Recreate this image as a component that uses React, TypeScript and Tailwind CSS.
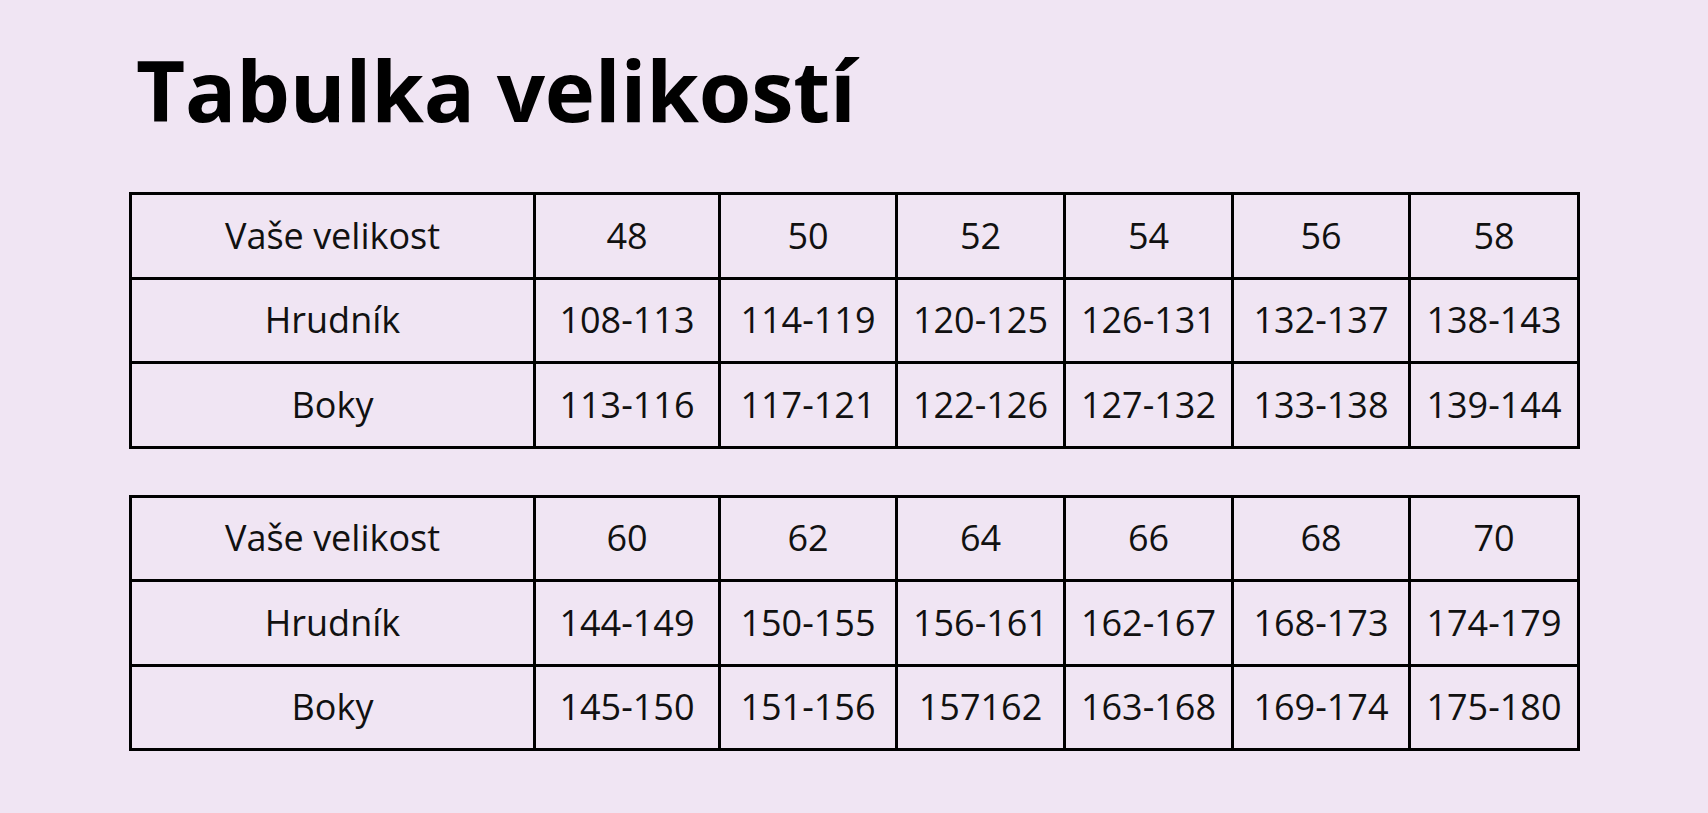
import React from 'react';

type SizeTable = {
  sizes: string[];
  chest: string[];
  hips: string[];
};

const tables: SizeTable[] = [
  {
    sizes: ['48', '50', '52', '54', '56', '58'],
    chest: ['108-113', '114-119', '120-125', '126-131', '132-137', '138-143'],
    hips: ['113-116', '117-121', '122-126', '127-132', '133-138', '139-144'],
  },
  {
    sizes: ['60', '62', '64', '66', '68', '70'],
    chest: ['144-149', '150-155', '156-161', '162-167', '168-173', '174-179'],
    hips: ['145-150', '151-156', '157162', '163-168', '169-174', '175-180'],
  },
];

const colWidths = ['w-[404px]', 'w-[185px]', 'w-[177px]', 'w-[168px]', 'w-[168px]', 'w-[177px]', 'w-[169px]'];

const Row: React.FC<{ label: string; values: string[] }> = ({ label, values }) => (
  <tr className="h-[84.5px]">
    <td className="border-[3px] border-black text-center">{label}</td>
    {values.map((v, i) => (
      <td key={i} className="border-[3px] border-black text-center">
        {v}
      </td>
    ))}
  </tr>
);

const App: React.FC = () => {
  return (
    <div
      className="min-h-screen bg-[#f0e5f3] px-[129px] pt-[47px] pb-10 text-[#111]"
      style={{ fontFamily: '"Open Sans", "Noto Sans", sans-serif' }}
    >
      <h1 className="ml-[7px] text-[85px] font-bold leading-none tracking-[-0.2px] text-black">
        Tabulka velikostí
      </h1>

      <div className="mt-[60px] flex flex-col gap-[46px]">
        {tables.map((t, idx) => (
          <table key={idx} className="w-[1449px] table-fixed border-collapse text-[36px] leading-none">
            <colgroup>
              {colWidths.map((w, i) => (
                <col key={i} className={w} />
              ))}
            </colgroup>
            <tbody>
              <Row label="Vaše velikost" values={t.sizes} />
              <Row label="Hrudník" values={t.chest} />
              <Row label="Boky" values={t.hips} />
            </tbody>
          </table>
        ))}
      </div>
    </div>
  );
};

export default App;
